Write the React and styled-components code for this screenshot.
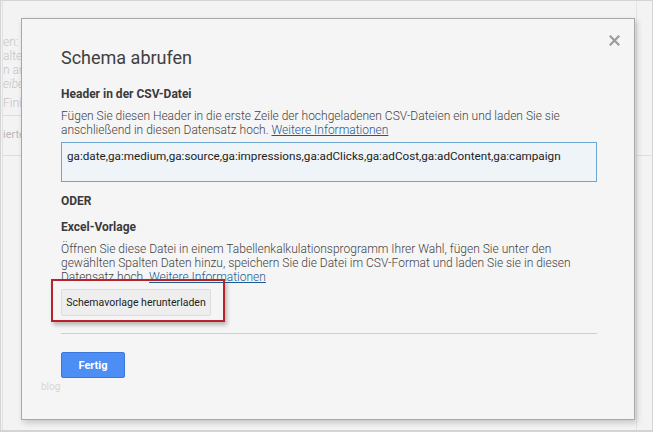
import React from "react";
import styled, { createGlobalStyle } from "styled-components";

const Global = createGlobalStyle`
  html, body {
    margin: 0;
    padding: 0;
    background: #f4f4f4;
  }
  body {
    font-family: Roboto, "Liberation Sans", sans-serif;
  }
`;

const Page = styled.div`
  width: 653px;
  height: 432px;
  box-sizing: border-box;
  border: 1px solid #d4d4d4;
  border-bottom-width: 2px;
  background: #f3f3f3;
  display: grid;
  overflow: hidden;
`;

const Behind = styled.div`
  grid-area: 1 / 1;
  display: flex;
  flex-direction: column;
  padding-top: 34px;
  color: #c4c4c4;
  font-size: 12px;
  font-weight: 300;
  line-height: 14px;
  border-left: 1px solid #e2e2e2;
  margin-left: 1px;
`;

const BehindLine = styled.div`
  font-style: ${(p) => (p.$italic ? "italic" : "normal")};
  margin-top: ${(p) => p.$gap || 0}px;
  white-space: nowrap;
`;

const BehindRule = styled.div`
  height: 1px;
  background: #dedede;
  width: ${(p) => p.$w || "20px"};
  margin: ${(p) => p.$m || "0"};
`;

const BehindSmall = styled.div`
  font-size: 11px;
  font-weight: 400;
  color: #b8b8b8;
  padding: 12px 0 0 0;
`;

const RightStrip = styled.div`
  grid-area: 1 / 1;
  justify-self: end;
  width: 14px;
  margin-right: 1px;
  border-left: 1px solid #e4e4e4;
`;

const Modal = styled.div`
  grid-area: 1 / 1;
  align-self: start;
  justify-self: start;
  margin: 17px 0 0 20px;
  width: 614px;
  height: 402px;
  box-sizing: border-box;
  background: #f5f5f5;
  border: 1px solid #a8a8a8;
  box-shadow: 2px 3px 6px rgba(0, 0, 0, 0.18);
  padding: 27px 37px 0 39px;
  position: relative;
  display: flex;
  flex-direction: column;
`;

const Close = styled.svg`
  position: absolute;
  top: 16px;
  right: 14px;
  width: 11px;
  height: 11px;
`;

const Title = styled.h1`
  margin: 0;
  font-size: 18px;
  font-weight: 400;
  color: #404040;
  line-height: 24px;
`;

const Heading = styled.h2`
  margin: ${(p) => p.$top || "15px"} 0 0 0;
  font-size: 12px;
  font-weight: 700;
  color: #3a3a3a;
  line-height: 16px;
`;

const Para = styled.p`
  margin: 7px 0 0 0;
  font-size: 12px;
  font-weight: 300;
  line-height: 14px;
  color: #444;
`;

const Link = styled.a`
  color: #1d5a90;
  text-decoration: underline;
`;

const Field = styled.div`
  margin-top: 5px;
  height: 40px;
  box-sizing: border-box;
  border: 1px solid #6ea6d2;
  background: #eef4f7;
  padding: 6px 5px;
  font-size: 11.7px;
  line-height: 14px;
  color: #222;
  white-space: nowrap;
`;

const ButtonWrap = styled.div`
  position: relative;
  align-self: flex-start;
  margin-top: 5px;
`;

const GreyButton = styled.button`
  height: 27px;
  width: 150px;
  box-sizing: border-box;
  background: #eeeeee;
  border: 1px solid #dcdcdc;
  border-radius: 2px;
  font-family: Roboto, "Liberation Sans", sans-serif;
  font-size: 10.5px;
  font-weight: 400;
  color: #222;
  padding: 0;
`;

const Annotation = styled.div`
  position: absolute;
  left: -10px;
  top: -10px;
  width: 174px;
  height: 43px;
  box-sizing: border-box;
  border: 2px solid #b8232b;
  box-shadow: 2px 3px 4px rgba(0, 0, 0, 0.25);
  pointer-events: none;
`;

const Rule = styled.div`
  height: 1px;
  background: #cfcfcf;
  margin-top: 17px;
  width: 536px;
`;

const PrimaryButton = styled.button`
  margin-top: 18px;
  align-self: flex-start;
  width: 64px;
  height: 26px;
  box-sizing: border-box;
  background: #4d8ef5;
  border: 1px solid #3a78dc;
  border-radius: 2px;
  color: #fff;
  font-family: Roboto, "Liberation Sans", sans-serif;
  font-size: 11px;
  font-weight: 700;
  padding: 0;
`;

const Watermark = styled.div`
  margin: 3px 0 0 -20px;
  font-size: 10px;
  color: #d6d6d6;
`;

export default function App() {
  return (
    <>
      <Global />
      <Page>
        <Behind>
          <BehindLine>en: g</BehindLine>
          <BehindLine>alter</BehindLine>
          <BehindLine>n an</BehindLine>
          <BehindLine $italic>eibe</BehindLine>
          <BehindLine $gap={5}>Finie</BehindLine>
          <BehindRule $m="5px 0 0 0" />
          <BehindSmall>ierte</BehindSmall>
          <BehindRule $w="100%" $m="13px 0 0 0" />
        </Behind>
        <RightStrip />
        <Modal>
          <Close viewBox="0 0 11 11">
            <path
              d="M1.5 1.5 L9.5 9.5 M9.5 1.5 L1.5 9.5"
              stroke="#9c9c9c"
              strokeWidth="2.2"
              strokeLinecap="square"
            />
          </Close>
          <Title>Schema abrufen</Title>
          <Heading $top="16px">Header in der CSV-Datei</Heading>
          <Para>
            Fügen Sie diesen Header in die erste Zeile der hochgeladenen
            CSV-Dateien ein und laden Sie sie anschließend in diesen Datensatz
            hoch. <Link>Weitere Informationen</Link>
          </Para>
          <Field>
            ga:date,ga:medium,ga:source,ga:impressions,ga:adClicks,ga:adCost,ga:adContent,ga:campaign
          </Field>
          <Heading $top="11px">ODER</Heading>
          <Heading $top="10px">Excel-Vorlage</Heading>
          <Para>
            Öffnen Sie diese Datei in einem Tabellenkalkulationsprogramm Ihrer
            Wahl, fügen Sie unter den gewählten Spalten Daten hinzu, speichern
            Sie die Datei im CSV-Format und laden Sie sie in diesen Datensatz
            hoch. <Link>Weitere Informationen</Link>
          </Para>
          <ButtonWrap>
            <GreyButton>Schemavorlage herunterladen</GreyButton>
            <Annotation />
          </ButtonWrap>
          <Rule />
          <PrimaryButton>Fertig</PrimaryButton>
          <Watermark>blog</Watermark>
        </Modal>
      </Page>
    </>
  );
}
